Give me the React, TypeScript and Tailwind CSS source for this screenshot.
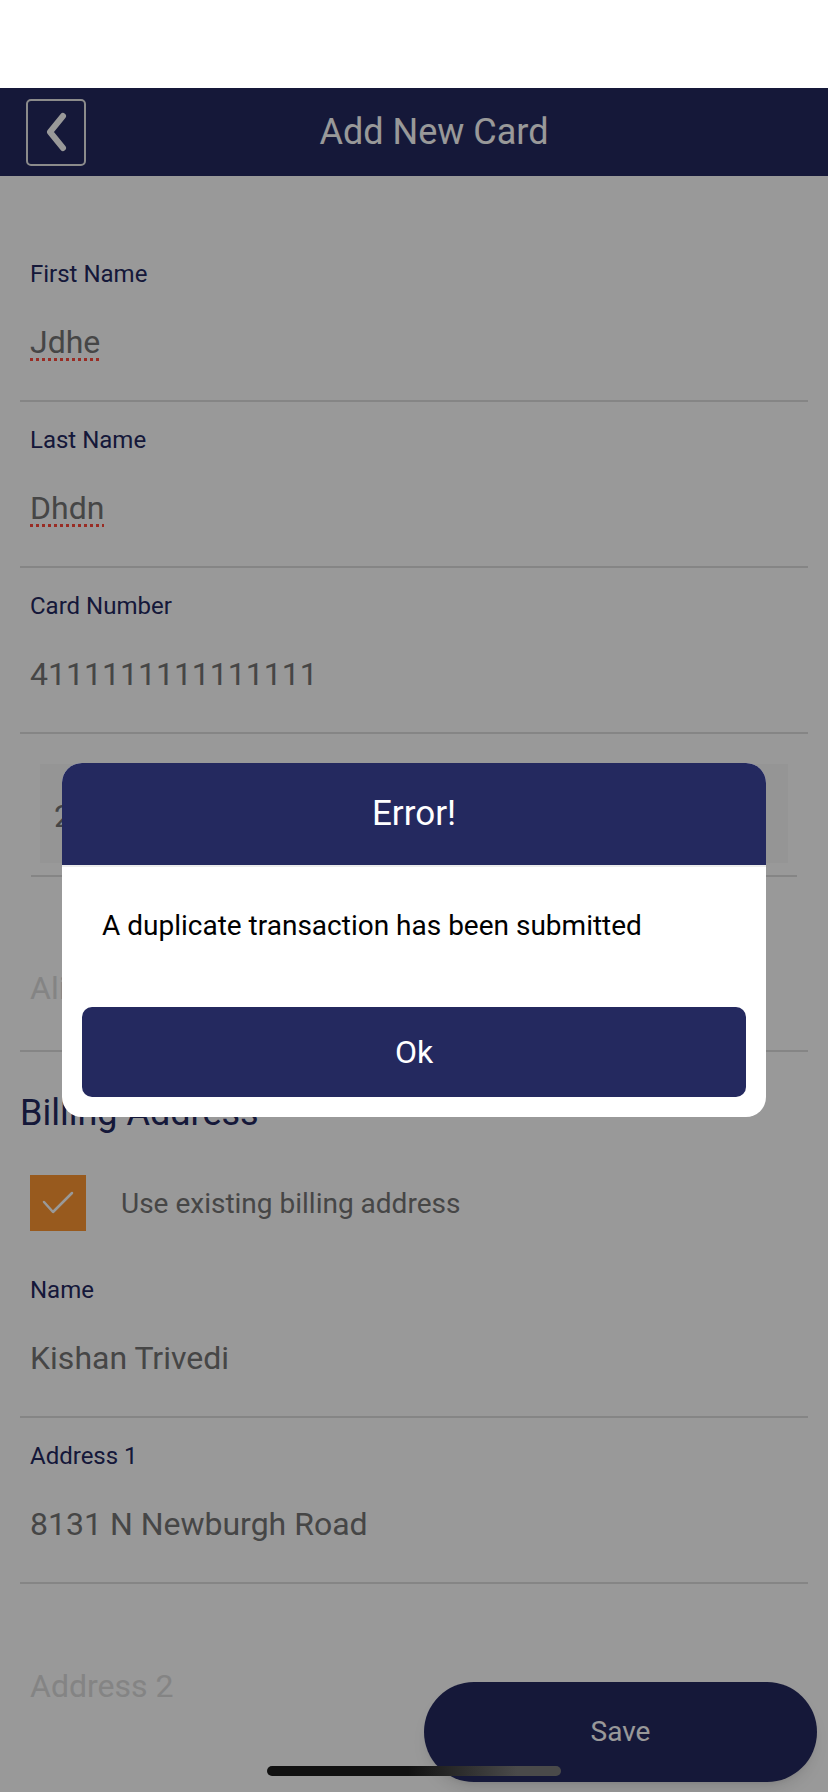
import React from 'react';

type FieldProps = {
  label: string;
  value: string;
  spell?: boolean;
};

const Field: React.FC<FieldProps> = ({ label, value, spell }) => (
  <div className="border-b-2 border-[#dedede] pt-[24px] pb-[39px]">
    <div className="pl-[10px] text-[24px] leading-[28px] text-[#24295f]">{label}</div>
    <div className="pl-[10px] mt-[35px] text-[32px] leading-[38px] text-[#757575]">
      <span
        className={
          spell
            ? 'underline decoration-dotted decoration-[3px] decoration-[#ff4a3d] underline-offset-[5px]'
            : ''
        }
      >
        {value}
      </span>
    </div>
  </div>
);

const App: React.FC = () => {
  return (
    <div className="relative h-[1792px] w-full overflow-hidden bg-white font-['Roboto','Liberation_Sans',sans-serif]">
      {/* Status bar */}
      <div className="h-[88px] bg-white" />

      {/* Header */}
      <div className="flex h-[88px] items-center bg-[#24295f] pl-[26px]">
        <button className="flex h-[67px] w-[60px] items-center justify-center rounded-[5px] border-2 border-[#e8e8e8]">
          <svg width="24" height="40" viewBox="0 0 24 40" fill="none">
            <path d="M19 4 L6 20 L19 36" stroke="#ffffff" strokeWidth="6" strokeLinecap="round" strokeLinejoin="round" />
          </svg>
        </button>
        <span className="mr-[46px] flex-1 text-center text-[36px] leading-[42px] text-white">Add New Card</span>
      </div>

      {/* Form */}
      <div className="px-[20px] pt-[60px]">
        <Field label="First Name" value="Jdhe" spell />
        <Field label="Last Name" value="Dhdn" spell />
        <Field label="Card Number" value="4111111111111111" />

        {/* Expiry */}
        <div className="px-[11px]">
          <div className="border-b-2 border-[#dedede] pt-[30px] pb-[12px]">
            <div className="mx-[9px] flex h-[99px] items-center bg-[#f9f9f9] pl-[14px] pt-[4px] text-[32px] leading-[38px] text-[#757575]">
              2025
            </div>
          </div>
        </div>

        {/* Alias */}
        <div className="border-b-2 border-[#dedede] pt-[92px] pb-[43px]">
          <div className="pl-[10px] text-[32px] leading-[38px] text-[#dcdcdc]">Alias Name</div>
        </div>

        <h2 className="mt-[40px] text-[36px] leading-[42px] font-normal text-[#24295f]">Billing Address</h2>

        <div className="mt-[41px] flex items-center pl-[10px]">
          <div className="flex h-[56px] w-[56px] items-center justify-center bg-[#fd9632]">
            <svg width="56" height="56" viewBox="0 0 56 56" fill="none">
              <path d="M14 27 L23 37 L42 18" stroke="#ffffff" strokeWidth="2.5" strokeLinecap="round" strokeLinejoin="round" />
            </svg>
          </div>
          <span className="ml-[35px] text-[28px] leading-[33px] text-[#757575]">Use existing billing address</span>
        </div>

        <div className="mt-[21px]">
          <Field label="Name" value="Kishan Trivedi" />
          <Field label="Address 1" value="8131 N Newburgh Road" />
        </div>

        <div className="pt-[83px] pb-[40px]">
          <div className="pl-[10px] text-[32px] leading-[38px] text-[#dcdcdc]">Address 2</div>
        </div>
      </div>

      {/* Floating save button */}
      <button className="absolute right-[11px] bottom-[10px] h-[100px] w-[393px] rounded-full bg-[#24295f] text-[28px] text-white shadow-lg">
        Save
      </button>

      {/* Dim overlay */}
      <div className="absolute inset-x-0 top-[88px] bottom-0 bg-black/40" />

      {/* Error dialog */}
      <div className="absolute top-[763px] left-[62px] w-[704px] overflow-hidden rounded-[20px] bg-white">
        <div className="flex h-[104px] items-center justify-center border-b-2 border-[#ececec] bg-[#24295f] text-[35px] text-white">
          Error!
        </div>
        <div className="px-[20px] pb-[20px]">
          <p className="pt-[42px] pl-[20px] text-[28px] leading-[33px] text-black">
            A duplicate transaction has been submitted
          </p>
          <button className="mt-[65px] flex h-[90px] w-full items-center justify-center rounded-[10px] bg-[#24295f] text-[32px] font-normal text-white">
            Ok
          </button>
        </div>
      </div>

      {/* Home indicator */}
      <div className="absolute bottom-[16px] left-[267px] h-[10px] w-[294px] rounded-full bg-[linear-gradient(to_right,#111111_48%,#4a4a4a_85%)]" />
    </div>
  );
};

export default App;
